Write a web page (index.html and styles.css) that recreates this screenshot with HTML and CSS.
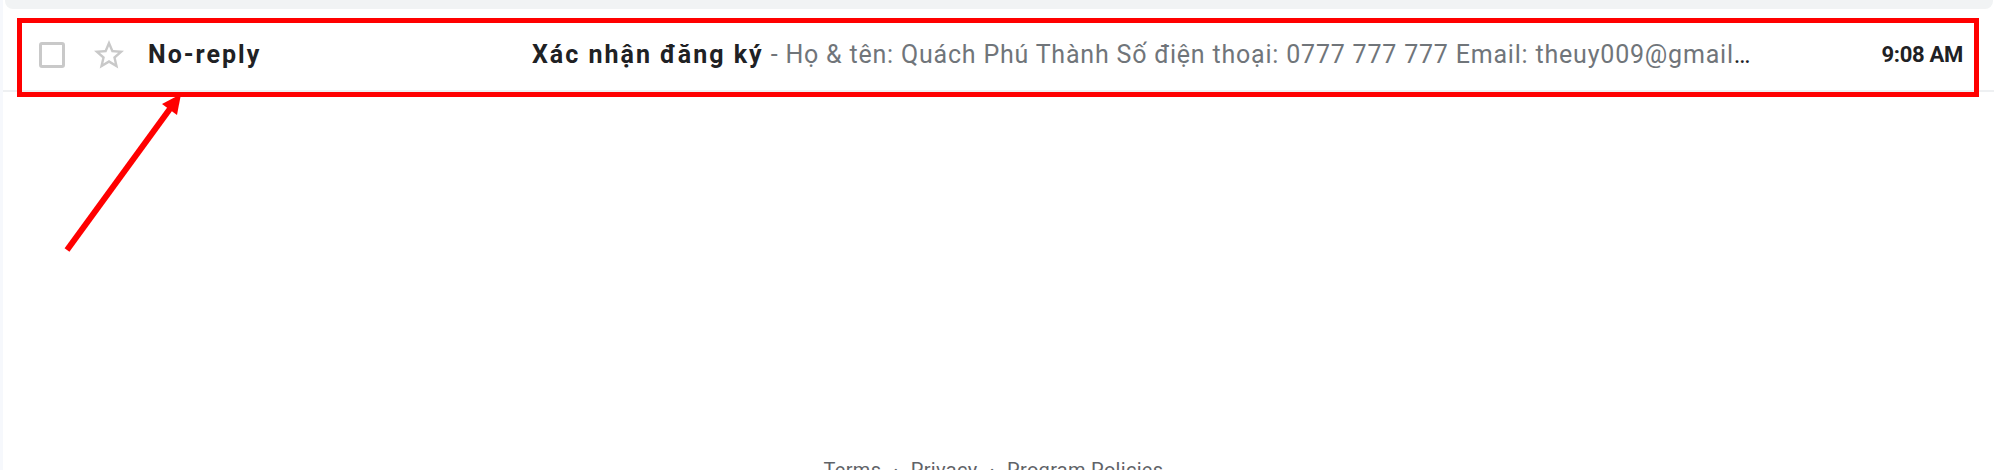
FILE: index.html
```html
<!DOCTYPE html>
<html lang="vi">

<head>
  <meta charset="UTF-8" />
  <meta name="viewport" content="width=device-width, initial-scale=1.0" />
  <title>Inbox</title>
  <link rel="stylesheet" href="styles.css">
</head>

<body>
  <div class="mail">
    <div class="topbar"></div>

    <div class="list">
      <div class="row">
        <span class="checkbox"></span>
        <svg class="star" viewBox="0 0 24 24" width="36" height="36">
          <path d="M22 9.24l-7.19-.62L12 2 9.19 8.63 2 9.24l5.46 4.73L5.82 21 12 17.27 18.18 21l-1.63-7.03L22 9.24zM12 15.4l-3.76 2.27 1-4.28-3.32-2.88 4.38-.38L12 6.1l1.71 4.04 4.38.38-3.32 2.88 1 4.28L12 15.4z" />
        </svg>
        <div class="sender">No-reply</div>
        <div class="subject">
          <span class="title">Xác nhận đăng ký</span>
          <span class="snippet"> - Họ &amp; tên: Quách Phú Thành Số điện thoại: 0777 777 777 Email: theuy009@gmail.com Nội dung: đăng ký</span>
        </div>
        <div class="time">9:08 AM</div>
      </div>
    </div>

    <footer class="footer">
      <span>Terms</span><span class="dot">·</span><span>Privacy</span><span class="dot">·</span><span>Program Policies</span>
    </footer>
  </div>

  <!-- annotation on top of the screenshot -->
  <div class="callout"></div>
  <svg class="arrow" width="200" height="270" viewBox="0 0 200 270">
    <line x1="67" y1="250" x2="172" y2="106" />
    <polygon points="181,94 162,104 177,115" />
  </svg>
</body>

</html>
```

FILE: styles.css
```css
* {
  margin: 0;
  padding: 0;
  box-sizing: border-box;
}

body {
  width: 2000px;
  height: 470px;
  overflow: hidden;
  background-color: #fff;
  font-family: Roboto, "Noto Sans", sans-serif;
  color: #202124;
  position: relative;
}

.mail {
  height: 100%;
  border-left: 3px solid #f6f8fc;
  display: flex;
  flex-direction: column;
}

.mail > * {
  flex: none;
}

.topbar {
  height: 9px;
  margin: 0 7px 0 2px;
  background-color: #f1f3f4;
  border-radius: 0 0 8px 8px;
}

.list {
  margin-top: 10px;
  margin-right: 6px;
}

.row {
  height: 73px;
  display: flex;
  align-items: center;
  padding: 0 31px 0 36px;
  border-bottom: 2px solid #eef0f2;
}

.checkbox {
  flex: none;
  width: 26px;
  height: 26px;
  border: 3px solid #c9c9c9;
  border-radius: 3px;
}

.star {
  flex: none;
  margin-left: 26px;
  fill: #c9c9c9;
}

.sender {
  flex: 0 0 384px;
  margin-left: 21px;
  font-size: 25px;
  font-weight: 700;
  letter-spacing: 2px;
}

.subject {
  flex: 1;
  min-width: 0;
  white-space: nowrap;
  overflow: hidden;
  text-overflow: ellipsis;
  font-size: 25px;
  letter-spacing: 0.8px;
  margin-right: 124px;
}

.title {
  font-weight: 700;
  letter-spacing: 2px;
}

.snippet {
  color: #70757a;
}

.time {
  flex: none;
  font-size: 22px;
  font-weight: 700;
  letter-spacing: -0.3px;
}

.footer {
  margin-top: 366px;
  display: flex;
  justify-content: center;
  gap: 10px;
  font-size: 20px;
  line-height: 24px;
  letter-spacing: 0.3px;
  color: #5f6368;
  padding-right: 16px;
}

.dot {
  margin: 0 2px;
}

.callout {
  position: absolute;
  left: 17px;
  top: 18px;
  width: 1962px;
  height: 79px;
  border: 5px solid #ff0000;
}

.arrow {
  position: absolute;
  left: 0;
  top: 0;
}

.arrow line {
  stroke: #ff0000;
  stroke-width: 6;
}

.arrow polygon {
  fill: #ff0000;
}
```
